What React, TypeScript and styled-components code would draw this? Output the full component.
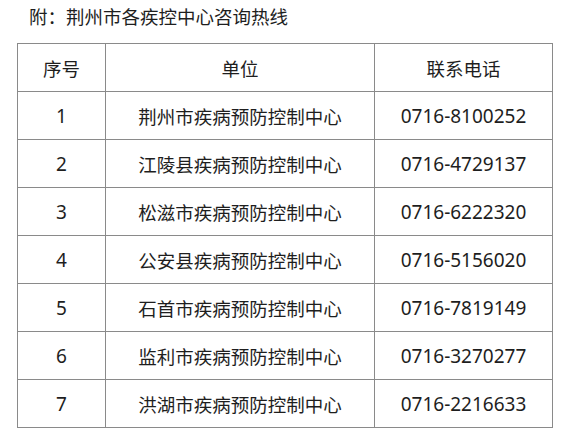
import styled, { createGlobalStyle } from 'styled-components';

const rows = [
    ['1', '荆州市疾病预防控制中心', '0716-8100252'],
    ['2', '江陵县疾病预防控制中心', '0716-4729137'],
    ['3', '松滋市疾病预防控制中心', '0716-6222320'],
    ['4', '公安县疾病预防控制中心', '0716-5156020'],
    ['5', '石首市疾病预防控制中心', '0716-7819149'],
    ['6', '监利市疾病预防控制中心', '0716-3270277'],
    ['7', '洪湖市疾病预防控制中心', '0716-2216633'],
];

export default function App() {
    return (
        <>
            <GlobalStyle />
            <Page>
                <Title>附：荆州市各疾控中心咨询热线</Title>
                <Table>
                    <colgroup>
                        <col style={{ width: 88 }} />
                        <col style={{ width: 269 }} />
                        <col style={{ width: 178 }} />
                    </colgroup>
                    <thead>
                        <tr>
                            <Cell as="th">序号</Cell>
                            <Cell as="th">单位</Cell>
                            <Cell as="th">联系电话</Cell>
                        </tr>
                    </thead>
                    <tbody>
                        {rows.map((r) => (
                            <tr key={r[0]}>
                                <Cell $num>{r[0]}</Cell>
                                <Cell>{r[1]}</Cell>
                                <Cell $num>{r[2]}</Cell>
                            </tr>
                        ))}
                    </tbody>
                </Table>
            </Page>
        </>
    );
}

const GlobalStyle = createGlobalStyle`
    body {
        margin: 0;
        background: #ffffff;
        font-family: 'Noto Sans', 'Noto Sans CJK SC', sans-serif;
        color: #1e1e1e;
    }
`;

const Page = styled.div`
    width: 569px;
    height: 439px;
    padding: 4px 0 0 17px;
    box-sizing: border-box;
`;

const Title = styled.div`
    font-size: 18.5px;
    line-height: 26px;
    height: 39px;
    padding-left: 12px;
    color: #1e1e1e;
`;

const Table = styled.table`
    border-collapse: collapse;
    table-layout: fixed;
    width: 535px;
    border: 1.5px solid #7a7a7a;
`;

const Cell = styled.td<{ $num?: boolean }>`
    height: 47px;
    padding: 0;
    border: 1px solid #8a8a8a;
    text-align: center;
    vertical-align: middle;
    font-size: ${(p) => (p.$num ? '19px' : '18.5px')};
    font-weight: 400;
    color: #1e1e1e;
`;
